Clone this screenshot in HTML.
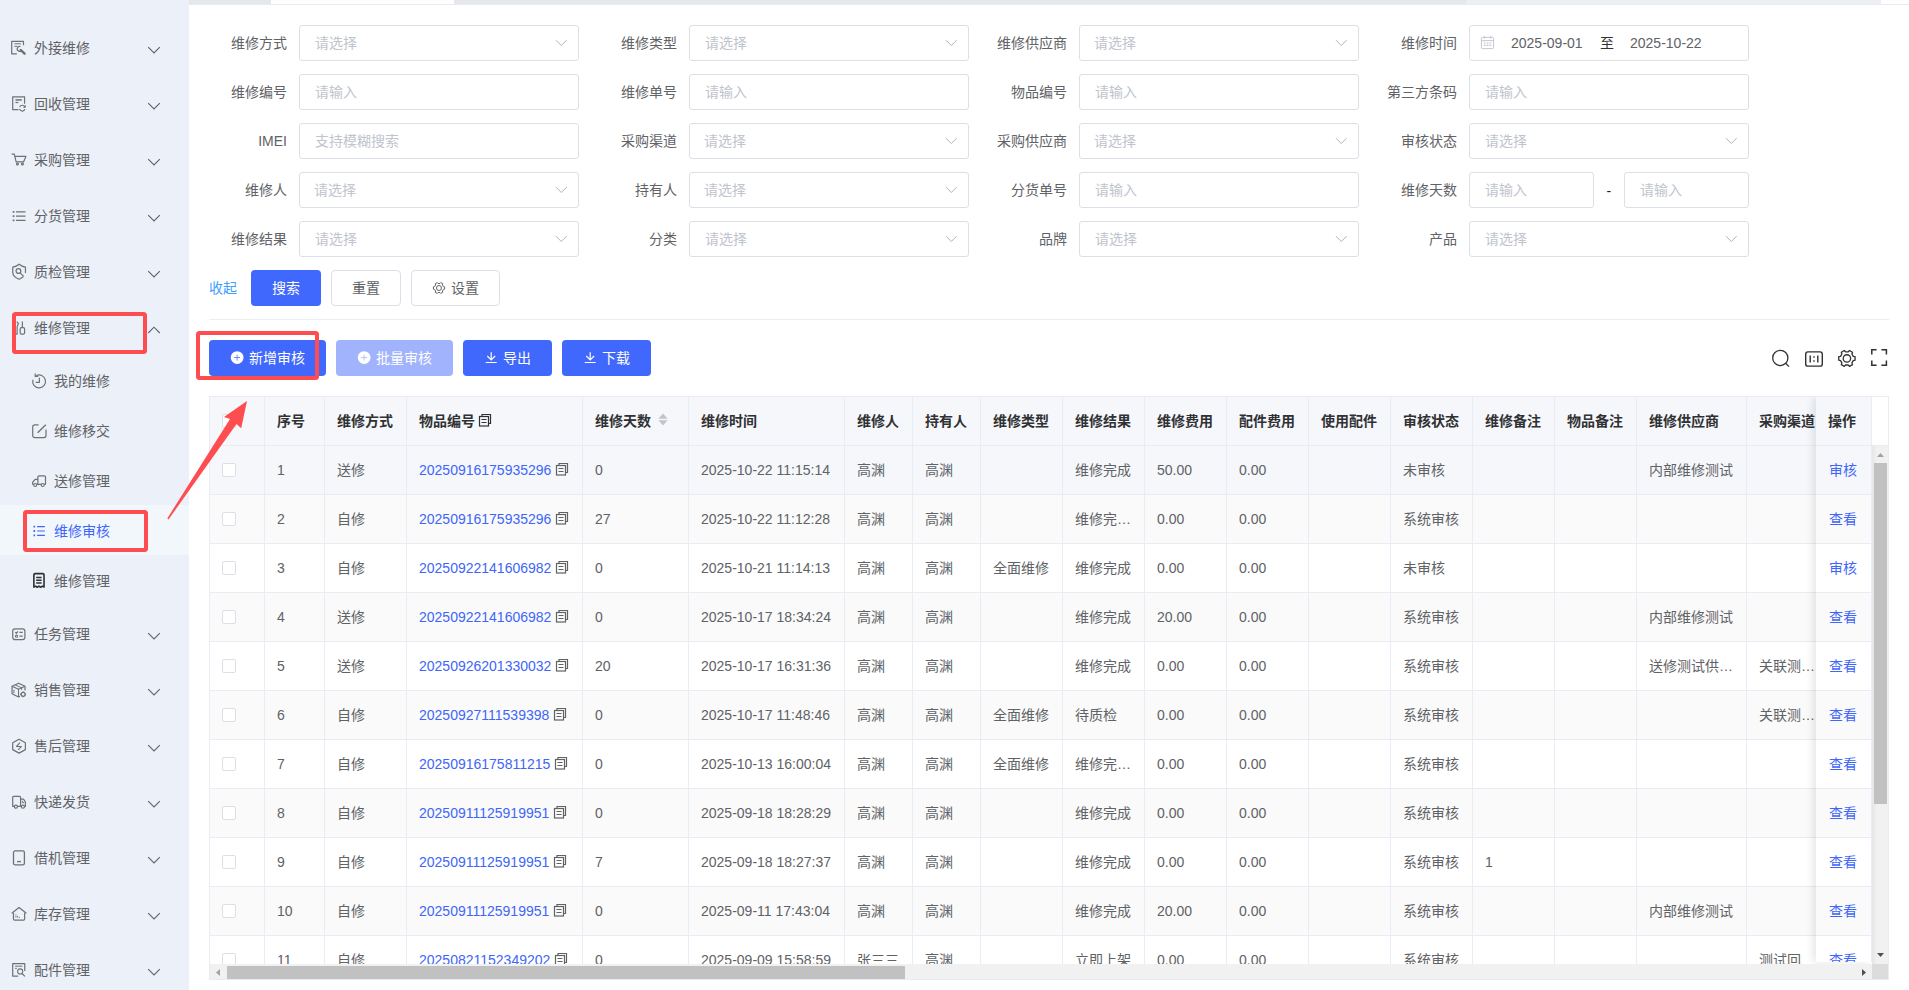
<!DOCTYPE html><html lang="zh-CN"><head><meta charset="utf-8"><title>维修审核</title><style>
*{box-sizing:border-box;margin:0;padding:0}
html,body{width:1909px;height:990px;overflow:hidden;background:#fff}
body{position:relative;font-family:"Liberation Sans","Noto Sans CJK SC",sans-serif;font-size:14px;color:#606266}
.a{position:absolute;white-space:nowrap}
.side{left:0;top:0;width:189px;height:990px;background:#ecf0f8}
.mi{left:0;width:189px;height:56px;line-height:56px}
.mi .t{left:34px;top:1px;height:56px;line-height:57px}
.mi svg.ic{position:absolute;left:9px;top:18px;width:20px;height:20px}
.mi svg.ar{position:absolute;left:147px;top:26px;width:14px;height:10px}
.si{left:0;width:189px;height:50px;line-height:50px}
.si .t{left:54px;top:1px;height:50px;line-height:51px}
.si svg.ic{position:absolute;left:30px;top:15px;width:20px;height:20px}
.si.on{background:#f2f7fb;color:#4066f9}
.lb{height:36px;line-height:36px;text-align:right;width:90px}
.in{height:36px;width:280px;border:1px solid #dcdfe6;border-radius:3px;background:#fff}
.ph{color:#c0c4cc;height:36px;line-height:36px}
.btn{height:36px;line-height:36px;border-radius:4px;text-align:center}
.btn.p{background:#4068fc;color:#fff}
.btn.d{background:#a0b3fc;color:#fff}
.btn.w{background:#fff;border:1px solid #dcdfe6;color:#606266;line-height:34px}
.th{font-weight:bold;color:#303133;height:48px;line-height:48px}
.td{height:48px;line-height:48px}
.lk{color:#4066f9}
.row{left:210px;width:1662px;height:49px;border-bottom:1px solid #eaecf5}
.vl{width:1px;background:#eaecf5}
.cb{width:14px;height:14px;border:1px solid #dcdfe6;border-radius:2px;background:#fff}
</style></head><body>
<div class="a" style="left:189px;top:0;width:1720px;height:4px;background:#fff"></div>
<div class="a" style="left:189px;top:0;width:82px;height:4px;background:#e4e7ec"></div>
<div class="a" style="left:454px;top:0;width:1012px;height:4px;background:#e4e7ec"></div>
<div class="a" style="left:1466px;top:0;width:415px;height:4px;background:#ebeff4"></div>
<div class="a" style="left:189px;top:4px;width:1720px;height:1px;background:#e9ebee"></div>
<div class="a side">
<div class="a mi" style="top:19px"><svg class="ic" viewBox="0 0 20 20" fill="none" stroke="#6e7175" stroke-width="1.2" stroke-linejoin="round"><g transform="translate(2.70 4.40) scale(0.9200 0.9172)"><path vector-effect="non-scaling-stroke" d="M12.8 4.2V0H0V13.5H5.6"/><path vector-effect="non-scaling-stroke" d="M3 2.6H10M3 5.4H6.2" stroke-width="1"/><path vector-effect="non-scaling-stroke" d="M9.6 5.6A2.7 2.7 0 1 0 11.2 9.2"/><path vector-effect="non-scaling-stroke" d="M9.8 9.4L14 13.4" stroke-width="2.4" stroke-linecap="round"/></g></svg><div class="a t">外接维修</div><svg class="ar" viewBox="0 0 14 10"><path d="M1.2 2.2 L7 8 L12.8 2.2" fill="none" stroke="#5f6368" stroke-width="1.1"/></svg></div>
<div class="a mi" style="top:75px"><svg class="ic" viewBox="0 0 20 20" fill="none" stroke="#6e7175" stroke-width="1.2" stroke-linejoin="round"><g transform="translate(3.70 3.80) scale(0.9130 0.9211)"><path vector-effect="non-scaling-stroke" d="M13 7.6V0H0V14H6.4"/><path vector-effect="non-scaling-stroke" d="M3 3.4H10" stroke-width="1.5"/><path vector-effect="non-scaling-stroke" d="M3 6.2H6.2" stroke-width="1.2"/><path vector-effect="non-scaling-stroke" d="M13.4 11.2A3.1 3.1 0 0 0 7.6 11.2M7.5 13.2A3.1 3.1 0 0 0 13.4 13.4"/><path vector-effect="non-scaling-stroke" d="M13.8 9.2V11.4H11.6" stroke-width="1"/></g></svg><div class="a t">回收管理</div><svg class="ar" viewBox="0 0 14 10"><path d="M1.2 2.2 L7 8 L12.8 2.2" fill="none" stroke="#5f6368" stroke-width="1.1"/></svg></div>
<div class="a mi" style="top:131px"><svg class="ic" viewBox="0 0 20 20" fill="none" stroke="#6e7175" stroke-width="1.2" stroke-linejoin="round"><g transform="translate(2.70 5.20) scale(0.9241 0.9024)"><path vector-effect="non-scaling-stroke" d="M0 0H2.8L4.8 8.6H12.8L15.4 2.4H3.4"/><circle vector-effect="non-scaling-stroke" cx="6.2" cy="10.8" r="1.0"/><circle vector-effect="non-scaling-stroke" cx="11.6" cy="10.8" r="1.0"/></g></svg><div class="a t">采购管理</div><svg class="ar" viewBox="0 0 14 10"><path d="M1.2 2.2 L7 8 L12.8 2.2" fill="none" stroke="#5f6368" stroke-width="1.1"/></svg></div>
<div class="a mi" style="top:187px"><svg class="ic" viewBox="0 0 20 20" fill="none" stroke="#6e7175" stroke-width="1.2" stroke-linejoin="round"><g transform="translate(3.70 6.00) scale(0.9143 0.9444)"><path vector-effect="non-scaling-stroke" d="M3.6 0.9H14M3.6 5.4H14M3.6 9.9H14" stroke-width="1.3"/><path vector-effect="non-scaling-stroke" d="M0 0.9H1.9M0 5.4H1.9M0 9.9H1.9" stroke-width="1.7"/></g></svg><div class="a t">分货管理</div><svg class="ar" viewBox="0 0 14 10"><path d="M1.2 2.2 L7 8 L12.8 2.2" fill="none" stroke="#5f6368" stroke-width="1.1"/></svg></div>
<div class="a mi" style="top:243px"><svg class="ic" viewBox="0 0 20 20" fill="none" stroke="#6e7175" stroke-width="1.2" stroke-linejoin="round"><g transform="translate(3.00 3.20) scale(0.9221 0.9268)"><path vector-effect="non-scaling-stroke" d="M14.6 9.6V3.2C12 2.8 9.6 1.6 7.7 0C5.8 1.6 3.4 2.8 0.8 3.2V8.6C0.8 12 3.8 14.6 7.7 16.2C9.3 15.5 10.8 14.7 12 13.6"/><circle vector-effect="non-scaling-stroke" cx="7" cy="7.4" r="2.6"/><path vector-effect="non-scaling-stroke" d="M8.9 9.3L12.4 12.8" stroke-linecap="round"/></g></svg><div class="a t">质检管理</div><svg class="ar" viewBox="0 0 14 10"><path d="M1.2 2.2 L7 8 L12.8 2.2" fill="none" stroke="#5f6368" stroke-width="1.1"/></svg></div>
<div class="a mi" style="top:299px"><svg class="ic" viewBox="0 0 20 20" fill="none" stroke="#6e7175" stroke-width="1.2" stroke-linejoin="round"><g transform="translate(5.60 4.50) scale(0.9000 0.9149)"><path vector-effect="non-scaling-stroke" d="M8.6 0V6.8"/><rect vector-effect="non-scaling-stroke" x="6.2" y="6.8" width="4.9" height="7" rx="1.4"/><path vector-effect="non-scaling-stroke" d="M2.4 0.2L4.2 2.2L2.8 5.6V13.8H0.4V6.2"/></g></svg><div class="a t">维修管理</div><svg class="ar" viewBox="0 0 14 10"><path d="M1.2 8 L7 2.2 L12.8 8" fill="none" stroke="#5f6368" stroke-width="1.1"/></svg></div>
<div class="a si" style="top:355px"><svg class="ic" viewBox="0 0 20 20" fill="none" stroke="#6e7175" stroke-width="1.2" stroke-linejoin="round"><path d="M6.1 5.75A6.4 6.4 0 1 1 2.92 9.74"/><path d="M5.2 3.4V6.5H8.2"/><path d="M9.4 7.7V12.3H5.7"/></svg><div class="a t">我的维修</div></div>
<div class="a si" style="top:405px"><svg class="ic" viewBox="0 0 20 20" fill="none" stroke="#6e7175" stroke-width="1.2" stroke-linejoin="round"><path d="M16 9.6V15.6a2 2 0 0 1 -2 2H4.7a2 2 0 0 1 -2 -2V6.9a2 2 0 0 1 2 -2H8.6"/><path d="M7.6 12.8L15.8 4.8" stroke-width="1.4"/></svg><div class="a t">维修移交</div></div>
<div class="a si" style="top:455px"><svg class="ic" viewBox="0 0 20 20" fill="none" stroke="#6e7175" stroke-width="1.2" stroke-linejoin="round"><path d="M14.4 14.3H15.5V7a1.2 1.2 0 0 0 -1.2 -1.2H9.1a1.2 1.2 0 0 0 -1.2 1.2V14.3H11"/><path d="M7.9 9.4H5.2L2.7 12.2V14.3H3.6M6.8 14.3H7.9"/><circle cx="5.2" cy="15" r="1.5"/><circle cx="12.7" cy="15" r="1.5"/></svg><div class="a t">送修管理</div></div>
<div class="a si on" style="top:505px"><svg class="ic" viewBox="0 0 20 20" fill="none" stroke="#4066f9" stroke-width="1.2" stroke-linejoin="round"><g transform="translate(3.50 5.80) scale(0.9048 0.8966)"><path vector-effect="non-scaling-stroke" d="M4 1H12.6M4 5.8H12.6M4 10.6H12.6" stroke-width="1.2"/><path vector-effect="non-scaling-stroke" d="M0 1H1.8M0 5.8H1.8M0 10.6H1.8" stroke-width="1.8"/></g></svg><div class="a t">维修审核</div></div>
<div class="a si" style="top:555px"><svg class="ic" viewBox="0 0 20 20" fill="none" stroke="#2f3033" stroke-width="1.2" stroke-linejoin="round"><g transform="translate(3.50 3.60) scale(0.9008 0.9236)"><path vector-effect="non-scaling-stroke" d="M0.4 14.6V1.4C0.4 0.6 1 0 1.8 0H10.3C11.1 0 11.7 0.6 11.7 1.4V14.6L9.8 13.6L7.9 14.8L6 13.6L4.2 14.8L2.3 13.6Z" stroke-width="1.6"/><path vector-effect="non-scaling-stroke" d="M3 4.2H9M3 7.2H9M3 10.2H9" stroke-width="1.3"/></g></svg><div class="a t">维修管理</div></div>
<div class="a mi" style="top:605px"><svg class="ic" viewBox="0 0 20 20" fill="none" stroke="#6e7175" stroke-width="1.2" stroke-linejoin="round"><g transform="translate(3.70 5.80) scale(0.9104 0.9008)"><rect vector-effect="non-scaling-stroke" x="0" y="0" width="13.4" height="12.1" rx="2.6"/><path vector-effect="non-scaling-stroke" d="M7.4 4H11M7.4 8.2H11" stroke-width="1.2"/><circle vector-effect="non-scaling-stroke" cx="4.2" cy="8.2" r="1.2" stroke-width="1.1"/><path vector-effect="non-scaling-stroke" d="M2.8 3.8L4 5L5.8 2.8" stroke-width="1.1"/></g></svg><div class="a t">任务管理</div><svg class="ar" viewBox="0 0 14 10"><path d="M1.2 2.2 L7 8 L12.8 2.2" fill="none" stroke="#5f6368" stroke-width="1.1"/></svg></div>
<div class="a mi" style="top:661px"><svg class="ic" viewBox="0 0 20 20" fill="none" stroke="#6e7175" stroke-width="1.2" stroke-linejoin="round"><g transform="translate(2.50 3.90) scale(0.9241 0.9231)"><path vector-effect="non-scaling-stroke" d="M14.6 8.2V3.6L7.6 0.3L0.6 3.6V11.8L7.6 15.2L9.2 14.4"/><path vector-effect="non-scaling-stroke" d="M0.6 3.6L7.6 7L14.6 3.6M7.6 7V15.2" stroke-width="1.1"/><path vector-effect="non-scaling-stroke" d="M3.8 2L11 5.4V7.6" stroke-width="1"/><path vector-effect="non-scaling-stroke" d="M2.6 7.4V11.2" stroke-width="1"/><circle vector-effect="non-scaling-stroke" cx="12.6" cy="12.4" r="2.2" stroke-width="1.3"/><path vector-effect="non-scaling-stroke" d="M12.6 9.2V10M12.6 14.8V15.6M9.4 12.4H10.2M15 12.4H15.8" stroke-width="1.2"/></g></svg><div class="a t">销售管理</div><svg class="ar" viewBox="0 0 14 10"><path d="M1.2 2.2 L7 8 L12.8 2.2" fill="none" stroke="#5f6368" stroke-width="1.1"/></svg></div>
<div class="a mi" style="top:717px"><svg class="ic" viewBox="0 0 20 20" fill="none" stroke="#6e7175" stroke-width="1.2" stroke-linejoin="round"><g transform="translate(3.70 4.20) scale(0.9137 0.9205)"><path vector-effect="non-scaling-stroke" d="M6.95 0L13.9 3.8V11.3L6.95 15.1L0 11.3V3.8Z"/><path vector-effect="non-scaling-stroke" d="M8 3.8L4.2 7.9H9.6L6 11.6" stroke-width="1.1"/></g></svg><div class="a t">售后管理</div><svg class="ar" viewBox="0 0 14 10"><path d="M1.2 2.2 L7 8 L12.8 2.2" fill="none" stroke="#5f6368" stroke-width="1.1"/></svg></div>
<div class="a mi" style="top:773px"><svg class="ic" viewBox="0 0 20 20" fill="none" stroke="#6e7175" stroke-width="1.2" stroke-linejoin="round"><g transform="translate(3.70 5.30) scale(0.9137 0.9098)"><path vector-effect="non-scaling-stroke" d="M1.6 11H0V1C0 0.4 0.4 0 1 0H7.6C8.2 0 8.6 0.4 8.6 1V11H5.4"/><path vector-effect="non-scaling-stroke" d="M8.6 3H11.8L13.9 6.4V11H12.8M8.6 11H9.6"/><circle vector-effect="non-scaling-stroke" cx="3.5" cy="11.4" r="1.7"/><circle vector-effect="non-scaling-stroke" cx="11.2" cy="11.4" r="1.7"/><path vector-effect="non-scaling-stroke" d="M10.6 5V7H12.4" stroke-width="1"/></g></svg><div class="a t">快递发货</div><svg class="ar" viewBox="0 0 14 10"><path d="M1.2 2.2 L7 8 L12.8 2.2" fill="none" stroke="#5f6368" stroke-width="1.1"/></svg></div>
<div class="a mi" style="top:829px"><svg class="ic" viewBox="0 0 20 20" fill="none" stroke="#6e7175" stroke-width="1.2" stroke-linejoin="round"><g transform="translate(4.50 3.90) scale(0.9008 0.9211)"><rect vector-effect="non-scaling-stroke" x="0" y="0" width="12.1" height="15.2" rx="1.8" stroke-width="1.3"/><path vector-effect="non-scaling-stroke" d="M4 11.6H8.2" stroke-width="1.4"/></g></svg><div class="a t">借机管理</div><svg class="ar" viewBox="0 0 14 10"><path d="M1.2 2.2 L7 8 L12.8 2.2" fill="none" stroke="#5f6368" stroke-width="1.1"/></svg></div>
<div class="a mi" style="top:885px"><svg class="ic" viewBox="0 0 20 20" fill="none" stroke="#6e7175" stroke-width="1.2" stroke-linejoin="round"><g transform="translate(2.70 4.60) scale(0.9245 0.9130)"><path vector-effect="non-scaling-stroke" d="M0 6.2L7.95 0L15.9 6.2"/><path vector-effect="non-scaling-stroke" d="M1.9 5.6V12.6C1.9 13.3 2.4 13.8 3.1 13.8H12.8C13.5 13.8 14 13.3 14 12.6V5.6"/><path vector-effect="non-scaling-stroke" d="M4.6 7.4V11.4M6.4 9.2V11.4M8.2 10.4V11.4" stroke-width="1" stroke-dasharray="1 0.6"/></g></svg><div class="a t">库存管理</div><svg class="ar" viewBox="0 0 14 10"><path d="M1.2 2.2 L7 8 L12.8 2.2" fill="none" stroke="#5f6368" stroke-width="1.1"/></svg></div>
<div class="a mi" style="top:941px"><svg class="ic" viewBox="0 0 20 20" fill="none" stroke="#6e7175" stroke-width="1.2" stroke-linejoin="round"><g transform="translate(3.70 4.60) scale(0.9124 0.9149)"><path vector-effect="non-scaling-stroke" d="M13.2 8V0H0V13.6H6"/><path vector-effect="non-scaling-stroke" d="M2.6 2.8H10.6" stroke-width="1"/><path vector-effect="non-scaling-stroke" d="M2.6 5.2H4.6" stroke-width="1"/><circle vector-effect="non-scaling-stroke" cx="8.2" cy="8.6" r="2.8" stroke-width="1.1"/><path vector-effect="non-scaling-stroke" d="M10.2 10.8L13.4 14" stroke-width="1.2"/></g></svg><div class="a t">配件管理</div><svg class="ar" viewBox="0 0 14 10"><path d="M1.2 2.2 L7 8 L12.8 2.2" fill="none" stroke="#5f6368" stroke-width="1.1"/></svg></div>
</div>
<div class="a lb" style="left:197px;top:25px">维修方式</div>
<div class="a in" style="left:299px;top:25px"><div class="a ph" style="left:15px;top:-1px">请选择</div><svg class="a" style="left:254px;top:12px;width:14px;height:10px" viewBox="0 0 14 10"><path d="M2 2.2 L7.3 7.5 L12.6 2.2" fill="none" stroke="#afb3bc" stroke-width="1"/></svg></div>
<div class="a lb" style="left:587px;top:25px">维修类型</div>
<div class="a in" style="left:689px;top:25px"><div class="a ph" style="left:15px;top:-1px">请选择</div><svg class="a" style="left:254px;top:12px;width:14px;height:10px" viewBox="0 0 14 10"><path d="M2 2.2 L7.3 7.5 L12.6 2.2" fill="none" stroke="#afb3bc" stroke-width="1"/></svg></div>
<div class="a lb" style="left:977px;top:25px">维修供应商</div>
<div class="a in" style="left:1079px;top:25px"><div class="a ph" style="left:14px;top:-1px">请选择</div><svg class="a" style="left:254px;top:12px;width:14px;height:10px" viewBox="0 0 14 10"><path d="M2 2.2 L7.3 7.5 L12.6 2.2" fill="none" stroke="#afb3bc" stroke-width="1"/></svg></div>
<div class="a lb" style="left:1367px;top:25px">维修时间</div>
<div class="a in" style="left:1469px;top:25px"><svg class="a" style="left:9.6px;top:9.2px;width:15px;height:15px" viewBox="0 0 16 16" fill="none" stroke="#c0c4cc" stroke-width="1"><rect x="1.5" y="2.5" width="13" height="12" rx="1"/><path d="M1.5 6H14.5M4.5 1V4M11.5 1V4"/><path d="M4 8.5H6M7 8.5H9M10 8.5H12M4 11H6M7 11H9M10 11H12" stroke-width="1.2"/></svg><div class="a" style="left:41px;top:-1px;height:36px;line-height:36px;color:#606266">2025-09-01</div><div class="a" style="left:130px;top:-1px;height:36px;line-height:36px;color:#303133">至</div><div class="a" style="left:160px;top:-1px;height:36px;line-height:36px;color:#606266">2025-10-22</div></div>
<div class="a lb" style="left:197px;top:74px">维修编号</div>
<div class="a in" style="left:299px;top:74px"><div class="a ph" style="left:15px;top:-1px">请输入</div></div>
<div class="a lb" style="left:587px;top:74px">维修单号</div>
<div class="a in" style="left:689px;top:74px"><div class="a ph" style="left:15px;top:-1px">请输入</div></div>
<div class="a lb" style="left:977px;top:74px">物品编号</div>
<div class="a in" style="left:1079px;top:74px"><div class="a ph" style="left:15px;top:-1px">请输入</div></div>
<div class="a lb" style="left:1367px;top:74px">第三方条码</div>
<div class="a in" style="left:1469px;top:74px"><div class="a ph" style="left:15px;top:-1px">请输入</div></div>
<div class="a lb" style="left:197px;top:123px">IMEI</div>
<div class="a in" style="left:299px;top:123px"><div class="a ph" style="left:15px;top:-1px">支持模糊搜索</div></div>
<div class="a lb" style="left:587px;top:123px">采购渠道</div>
<div class="a in" style="left:689px;top:123px"><div class="a ph" style="left:14px;top:-1px">请选择</div><svg class="a" style="left:254px;top:12px;width:14px;height:10px" viewBox="0 0 14 10"><path d="M2 2.2 L7.3 7.5 L12.6 2.2" fill="none" stroke="#afb3bc" stroke-width="1"/></svg></div>
<div class="a lb" style="left:977px;top:123px">采购供应商</div>
<div class="a in" style="left:1079px;top:123px"><div class="a ph" style="left:14px;top:-1px">请选择</div><svg class="a" style="left:254px;top:12px;width:14px;height:10px" viewBox="0 0 14 10"><path d="M2 2.2 L7.3 7.5 L12.6 2.2" fill="none" stroke="#afb3bc" stroke-width="1"/></svg></div>
<div class="a lb" style="left:1367px;top:123px">审核状态</div>
<div class="a in" style="left:1469px;top:123px"><div class="a ph" style="left:15px;top:-1px">请选择</div><svg class="a" style="left:254px;top:12px;width:14px;height:10px" viewBox="0 0 14 10"><path d="M2 2.2 L7.3 7.5 L12.6 2.2" fill="none" stroke="#afb3bc" stroke-width="1"/></svg></div>
<div class="a lb" style="left:197px;top:172px">维修人</div>
<div class="a in" style="left:299px;top:172px"><div class="a ph" style="left:14px;top:-1px">请选择</div><svg class="a" style="left:254px;top:12px;width:14px;height:10px" viewBox="0 0 14 10"><path d="M2 2.2 L7.3 7.5 L12.6 2.2" fill="none" stroke="#afb3bc" stroke-width="1"/></svg></div>
<div class="a lb" style="left:587px;top:172px">持有人</div>
<div class="a in" style="left:689px;top:172px"><div class="a ph" style="left:14px;top:-1px">请选择</div><svg class="a" style="left:254px;top:12px;width:14px;height:10px" viewBox="0 0 14 10"><path d="M2 2.2 L7.3 7.5 L12.6 2.2" fill="none" stroke="#afb3bc" stroke-width="1"/></svg></div>
<div class="a lb" style="left:977px;top:172px">分货单号</div>
<div class="a in" style="left:1079px;top:172px"><div class="a ph" style="left:15px;top:-1px">请输入</div></div>
<div class="a lb" style="left:1367px;top:172px">维修天数</div>
<div class="a in" style="left:1469px;top:172px;width:125px"><div class="a ph" style="left:15px;top:-1px">请输入</div></div>
<div class="a" style="left:1606.5px;top:173px;height:36px;line-height:36px;color:#1f1f1f">-</div>
<div class="a in" style="left:1624px;top:172px;width:125px"><div class="a ph" style="left:15px;top:-1px">请输入</div></div>
<div class="a lb" style="left:197px;top:221px">维修结果</div>
<div class="a in" style="left:299px;top:221px"><div class="a ph" style="left:15px;top:-1px">请选择</div><svg class="a" style="left:254px;top:12px;width:14px;height:10px" viewBox="0 0 14 10"><path d="M2 2.2 L7.3 7.5 L12.6 2.2" fill="none" stroke="#afb3bc" stroke-width="1"/></svg></div>
<div class="a lb" style="left:587px;top:221px">分类</div>
<div class="a in" style="left:689px;top:221px"><div class="a ph" style="left:15px;top:-1px">请选择</div><svg class="a" style="left:254px;top:12px;width:14px;height:10px" viewBox="0 0 14 10"><path d="M2 2.2 L7.3 7.5 L12.6 2.2" fill="none" stroke="#afb3bc" stroke-width="1"/></svg></div>
<div class="a lb" style="left:977px;top:221px">品牌</div>
<div class="a in" style="left:1079px;top:221px"><div class="a ph" style="left:15px;top:-1px">请选择</div><svg class="a" style="left:254px;top:12px;width:14px;height:10px" viewBox="0 0 14 10"><path d="M2 2.2 L7.3 7.5 L12.6 2.2" fill="none" stroke="#afb3bc" stroke-width="1"/></svg></div>
<div class="a lb" style="left:1367px;top:221px">产品</div>
<div class="a in" style="left:1469px;top:221px"><div class="a ph" style="left:15px;top:-1px">请选择</div><svg class="a" style="left:254px;top:12px;width:14px;height:10px" viewBox="0 0 14 10"><path d="M2 2.2 L7.3 7.5 L12.6 2.2" fill="none" stroke="#afb3bc" stroke-width="1"/></svg></div>
<div class="a" style="left:209px;top:270px;height:36px;line-height:36px;color:#409eff">收起</div>
<div class="a btn p" style="left:251px;top:270px;width:70px">搜索</div>
<div class="a btn w" style="left:331px;top:270px;width:70px">重置</div>
<div class="a btn w" style="left:411px;top:270px;width:89px;text-align:left"><svg class="a" style="left:19.9px;top:9.75px;width:14px;height:14px" viewBox="0 0 14 14" fill="none" stroke="#606266" stroke-width="1" stroke-linejoin="round"><path d="M11.36 5.53 L12.58 5.81 L12.58 8.19 L11.36 8.47 L10.45 10.04 L10.81 11.24 L8.76 12.42 L7.91 11.51 L6.09 11.51 L5.24 12.42 L3.19 11.24 L3.55 10.04 L2.64 8.47 L1.42 8.19 L1.42 5.81 L2.64 5.53 L3.55 3.96 L3.19 2.76 L5.24 1.58 L6.09 2.49 L7.91 2.49 L8.76 1.58 L10.81 2.76 L10.45 3.96Z"/><circle cx="7" cy="7" r="2.5"/></svg><div class="a" style="left:39px;top:0;line-height:34px">设置</div></div>
<div class="a" style="left:209px;top:319px;width:1680px;height:1px;background:#ebedf0"></div>
<div class="a btn p" style="left:209px;top:340px;width:117px;text-align:left"><svg class="a" style="left:21px;top:11px;width:14px;height:14px" viewBox="0 0 14 14"><circle cx="7.15" cy="6.55" r="6.4" fill="#fff"/><path d="M7.1 3.7V9.6M4.1 6.5H10.1" stroke="#4068fc" stroke-width="0.9" fill="none" opacity="0.85"/></svg><div class="a" style="left:40px;top:0;line-height:36px">新增审核</div></div>
<div class="a btn d" style="left:336px;top:340px;width:117px;text-align:left"><svg class="a" style="left:21px;top:11px;width:14px;height:14px" viewBox="0 0 14 14"><circle cx="7.15" cy="6.55" r="6.4" fill="#fff"/><path d="M7.1 3.7V9.6M4.1 6.5H10.1" stroke="#a0b3fc" stroke-width="0.9" fill="none" opacity="0.85"/></svg><div class="a" style="left:40px;top:0;line-height:36px">批量审核</div></div>
<div class="a btn p" style="left:463px;top:340px;width:89px;text-align:left"><svg class="a" style="left:21px;top:11px;width:14px;height:14px" viewBox="0 0 14 14" fill="none" stroke="#fff" stroke-width="1.2"><path d="M7.2 1.3V8.8M3.3 5L7.2 8.9L11.1 5M1.7 11.5H12.7"/></svg><div class="a" style="left:40px;top:0;line-height:36px">导出</div></div>
<div class="a btn p" style="left:562px;top:340px;width:89px;text-align:left"><svg class="a" style="left:21px;top:11px;width:14px;height:14px" viewBox="0 0 14 14" fill="none" stroke="#fff" stroke-width="1.2"><path d="M7.2 1.3V8.8M3.3 5L7.2 8.9L11.1 5M1.7 11.5H12.7"/></svg><div class="a" style="left:40px;top:0;line-height:36px">下载</div></div>
<svg class="a" style="left:1770px;top:347px;width:22px;height:22px" viewBox="0 0 22 22" fill="none" stroke="#303133" stroke-width="1.3"><circle cx="10.3" cy="10.95" r="7.6"/><path d="M15.7 16.3L19 19.6"/></svg>
<svg class="a" style="left:1803px;top:347px;width:22px;height:22px" viewBox="0 0 22 22" fill="none" stroke="#303133" stroke-width="1.4"><rect x="2.7" y="4.9" width="16.6" height="14.2" rx="2.2"/><path d="M7.2 8.4V15.6M14.8 8.4V15.6" /><path d="M11 9.2V10.8M11 13.2V14.8"/></svg>
<svg class="a" style="left:1836px;top:347px;width:22px;height:22px" viewBox="0 0 22 22" fill="none" stroke="#303133" stroke-width="1.3" stroke-linejoin="round"><path d="M17.25 9.31 L19.07 9.71 L19.07 13.19 L17.25 13.59 L15.93 15.88 L16.49 17.66 L13.48 19.39 L12.22 18.02 L9.58 18.02 L8.32 19.39 L5.31 17.66 L5.87 15.88 L4.55 13.59 L2.73 13.19 L2.73 9.71 L4.55 9.31 L5.87 7.02 L5.31 5.24 L8.32 3.51 L9.58 4.88 L12.22 4.88 L13.48 3.51 L16.49 5.24 L15.93 7.02Z"/><circle cx="10.9" cy="11.45" r="3.7"/></svg>
<svg class="a" style="left:1868px;top:346px;width:22px;height:22px" viewBox="0 0 22 22" fill="none" stroke="#303133" stroke-width="1.5"><path d="M3.8 8.6V3.8H8.6M13.4 3.8H18.4V8.6M18.4 14.4V19.2H13.4M8.6 19.2H3.8V14.4"/></svg>
<div class="a" style="left:209px;top:396px;width:1680px;height:584px;border:1px solid #eaecf5;overflow:hidden;background:#fff">
<div class="a" style="left:0;top:0;width:1662px;height:49px;background:#f5f7fb;border-bottom:1px solid #eaecf5"></div>
<div class="a th" style="left:67px;top:0">序号</div>
<div class="a th" style="left:127px;top:0">维修方式</div>
<div class="a th" style="left:209px;top:0">物品编号<svg style="display:inline-block;vertical-align:-1px;margin-left:3px;width:14px;height:14px" viewBox="0 0 14 14" fill="none" stroke="#303133" stroke-width="1.2"><path d="M4 3.5V1.5H12.5V10.5H10.5"/><rect x="1.5" y="3.5" width="9" height="9.5"/><path d="M3.5 6.5H8.5M3.5 9.5H8.5"/></svg></div>
<div class="a th" style="left:385px;top:0">维修天数<svg style="position:absolute;left:63px;top:15.7px;width:10px;height:13px" viewBox="0 0 10 13"><path d="M5 0.6L9.6 5.7H0.4Z" fill="#c0c4cc"/><path d="M5 12.4L9.6 7.3H0.4Z" fill="#c0c4cc"/></svg></div>
<div class="a th" style="left:491px;top:0">维修时间</div>
<div class="a th" style="left:647px;top:0">维修人</div>
<div class="a th" style="left:715px;top:0">持有人</div>
<div class="a th" style="left:783px;top:0">维修类型</div>
<div class="a th" style="left:865px;top:0">维修结果</div>
<div class="a th" style="left:947px;top:0">维修费用</div>
<div class="a th" style="left:1029px;top:0">配件费用</div>
<div class="a th" style="left:1111px;top:0">使用配件</div>
<div class="a th" style="left:1193px;top:0">审核状态</div>
<div class="a th" style="left:1275px;top:0">维修备注</div>
<div class="a th" style="left:1357px;top:0">物品备注</div>
<div class="a th" style="left:1439px;top:0">维修供应商</div>
<div class="a th" style="left:1549px;top:0">采购渠道</div>
<div class="a cb" style="left:12px;top:17px"></div>
<div class="a" style="left:0;top:49px;width:1662px;height:49px;background:#f5f7fb;border-bottom:1px solid #eaecf5">
<div class="a cb" style="left:12px;top:17px"></div>
<div class="a td" style="left:67px;top:0;width:47px;overflow:hidden">1</div>
<div class="a td" style="left:127px;top:0;width:69px;overflow:hidden">送修</div>
<div class="a td lk" style="left:209px;top:0">20250916175935296<svg style="display:inline-block;vertical-align:-1px;margin-left:4px;width:14px;height:14px" viewBox="0 0 14 14" fill="none" stroke="#606266" stroke-width="1.2"><path d="M4 3.5V1.5H12.5V10.5H10.5"/><rect x="1.5" y="3.5" width="9" height="9.5"/><path d="M3.5 6.5H8.5M3.5 9.5H8.5"/></svg></div>
<div class="a td" style="left:385px;top:0;width:93px;overflow:hidden">0</div>
<div class="a td" style="left:491px;top:0;width:143px;overflow:hidden">2025-10-22 11:15:14</div>
<div class="a td" style="left:647px;top:0;width:55px;overflow:hidden">高渊</div>
<div class="a td" style="left:715px;top:0;width:55px;overflow:hidden">高渊</div>
<div class="a td" style="left:865px;top:0;width:69px;overflow:hidden">维修完成</div>
<div class="a td" style="left:947px;top:0;width:69px;overflow:hidden">50.00</div>
<div class="a td" style="left:1029px;top:0;width:69px;overflow:hidden">0.00</div>
<div class="a td" style="left:1193px;top:0;width:69px;overflow:hidden">未审核</div>
<div class="a td" style="left:1439px;top:0;width:97px;overflow:hidden">内部维修测试</div>
</div>
<div class="a" style="left:0;top:98px;width:1662px;height:49px;background:#fafafa;border-bottom:1px solid #eaecf5">
<div class="a cb" style="left:12px;top:17px"></div>
<div class="a td" style="left:67px;top:0;width:47px;overflow:hidden">2</div>
<div class="a td" style="left:127px;top:0;width:69px;overflow:hidden">自修</div>
<div class="a td lk" style="left:209px;top:0">20250916175935296<svg style="display:inline-block;vertical-align:-1px;margin-left:4px;width:14px;height:14px" viewBox="0 0 14 14" fill="none" stroke="#606266" stroke-width="1.2"><path d="M4 3.5V1.5H12.5V10.5H10.5"/><rect x="1.5" y="3.5" width="9" height="9.5"/><path d="M3.5 6.5H8.5M3.5 9.5H8.5"/></svg></div>
<div class="a td" style="left:385px;top:0;width:93px;overflow:hidden">27</div>
<div class="a td" style="left:491px;top:0;width:143px;overflow:hidden">2025-10-22 11:12:28</div>
<div class="a td" style="left:647px;top:0;width:55px;overflow:hidden">高渊</div>
<div class="a td" style="left:715px;top:0;width:55px;overflow:hidden">高渊</div>
<div class="a td" style="left:865px;top:0;width:69px;overflow:hidden">维修完…</div>
<div class="a td" style="left:947px;top:0;width:69px;overflow:hidden">0.00</div>
<div class="a td" style="left:1029px;top:0;width:69px;overflow:hidden">0.00</div>
<div class="a td" style="left:1193px;top:0;width:69px;overflow:hidden">系统审核</div>
</div>
<div class="a" style="left:0;top:147px;width:1662px;height:49px;background:#fff;border-bottom:1px solid #eaecf5">
<div class="a cb" style="left:12px;top:17px"></div>
<div class="a td" style="left:67px;top:0;width:47px;overflow:hidden">3</div>
<div class="a td" style="left:127px;top:0;width:69px;overflow:hidden">自修</div>
<div class="a td lk" style="left:209px;top:0">20250922141606982<svg style="display:inline-block;vertical-align:-1px;margin-left:4px;width:14px;height:14px" viewBox="0 0 14 14" fill="none" stroke="#606266" stroke-width="1.2"><path d="M4 3.5V1.5H12.5V10.5H10.5"/><rect x="1.5" y="3.5" width="9" height="9.5"/><path d="M3.5 6.5H8.5M3.5 9.5H8.5"/></svg></div>
<div class="a td" style="left:385px;top:0;width:93px;overflow:hidden">0</div>
<div class="a td" style="left:491px;top:0;width:143px;overflow:hidden">2025-10-21 11:14:13</div>
<div class="a td" style="left:647px;top:0;width:55px;overflow:hidden">高渊</div>
<div class="a td" style="left:715px;top:0;width:55px;overflow:hidden">高渊</div>
<div class="a td" style="left:783px;top:0;width:69px;overflow:hidden">全面维修</div>
<div class="a td" style="left:865px;top:0;width:69px;overflow:hidden">维修完成</div>
<div class="a td" style="left:947px;top:0;width:69px;overflow:hidden">0.00</div>
<div class="a td" style="left:1029px;top:0;width:69px;overflow:hidden">0.00</div>
<div class="a td" style="left:1193px;top:0;width:69px;overflow:hidden">未审核</div>
</div>
<div class="a" style="left:0;top:196px;width:1662px;height:49px;background:#fafafa;border-bottom:1px solid #eaecf5">
<div class="a cb" style="left:12px;top:17px"></div>
<div class="a td" style="left:67px;top:0;width:47px;overflow:hidden">4</div>
<div class="a td" style="left:127px;top:0;width:69px;overflow:hidden">送修</div>
<div class="a td lk" style="left:209px;top:0">20250922141606982<svg style="display:inline-block;vertical-align:-1px;margin-left:4px;width:14px;height:14px" viewBox="0 0 14 14" fill="none" stroke="#606266" stroke-width="1.2"><path d="M4 3.5V1.5H12.5V10.5H10.5"/><rect x="1.5" y="3.5" width="9" height="9.5"/><path d="M3.5 6.5H8.5M3.5 9.5H8.5"/></svg></div>
<div class="a td" style="left:385px;top:0;width:93px;overflow:hidden">0</div>
<div class="a td" style="left:491px;top:0;width:143px;overflow:hidden">2025-10-17 18:34:24</div>
<div class="a td" style="left:647px;top:0;width:55px;overflow:hidden">高渊</div>
<div class="a td" style="left:715px;top:0;width:55px;overflow:hidden">高渊</div>
<div class="a td" style="left:865px;top:0;width:69px;overflow:hidden">维修完成</div>
<div class="a td" style="left:947px;top:0;width:69px;overflow:hidden">20.00</div>
<div class="a td" style="left:1029px;top:0;width:69px;overflow:hidden">0.00</div>
<div class="a td" style="left:1193px;top:0;width:69px;overflow:hidden">系统审核</div>
<div class="a td" style="left:1439px;top:0;width:97px;overflow:hidden">内部维修测试</div>
</div>
<div class="a" style="left:0;top:245px;width:1662px;height:49px;background:#fff;border-bottom:1px solid #eaecf5">
<div class="a cb" style="left:12px;top:17px"></div>
<div class="a td" style="left:67px;top:0;width:47px;overflow:hidden">5</div>
<div class="a td" style="left:127px;top:0;width:69px;overflow:hidden">送修</div>
<div class="a td lk" style="left:209px;top:0">20250926201330032<svg style="display:inline-block;vertical-align:-1px;margin-left:4px;width:14px;height:14px" viewBox="0 0 14 14" fill="none" stroke="#606266" stroke-width="1.2"><path d="M4 3.5V1.5H12.5V10.5H10.5"/><rect x="1.5" y="3.5" width="9" height="9.5"/><path d="M3.5 6.5H8.5M3.5 9.5H8.5"/></svg></div>
<div class="a td" style="left:385px;top:0;width:93px;overflow:hidden">20</div>
<div class="a td" style="left:491px;top:0;width:143px;overflow:hidden">2025-10-17 16:31:36</div>
<div class="a td" style="left:647px;top:0;width:55px;overflow:hidden">高渊</div>
<div class="a td" style="left:715px;top:0;width:55px;overflow:hidden">高渊</div>
<div class="a td" style="left:865px;top:0;width:69px;overflow:hidden">维修完成</div>
<div class="a td" style="left:947px;top:0;width:69px;overflow:hidden">0.00</div>
<div class="a td" style="left:1029px;top:0;width:69px;overflow:hidden">0.00</div>
<div class="a td" style="left:1193px;top:0;width:69px;overflow:hidden">系统审核</div>
<div class="a td" style="left:1439px;top:0;width:97px;overflow:hidden">送修测试供…</div>
<div class="a td" style="left:1549px;top:0;width:112px;overflow:hidden">关联测…</div>
</div>
<div class="a" style="left:0;top:294px;width:1662px;height:49px;background:#fafafa;border-bottom:1px solid #eaecf5">
<div class="a cb" style="left:12px;top:17px"></div>
<div class="a td" style="left:67px;top:0;width:47px;overflow:hidden">6</div>
<div class="a td" style="left:127px;top:0;width:69px;overflow:hidden">自修</div>
<div class="a td lk" style="left:209px;top:0">20250927111539398<svg style="display:inline-block;vertical-align:-1px;margin-left:4px;width:14px;height:14px" viewBox="0 0 14 14" fill="none" stroke="#606266" stroke-width="1.2"><path d="M4 3.5V1.5H12.5V10.5H10.5"/><rect x="1.5" y="3.5" width="9" height="9.5"/><path d="M3.5 6.5H8.5M3.5 9.5H8.5"/></svg></div>
<div class="a td" style="left:385px;top:0;width:93px;overflow:hidden">0</div>
<div class="a td" style="left:491px;top:0;width:143px;overflow:hidden">2025-10-17 11:48:46</div>
<div class="a td" style="left:647px;top:0;width:55px;overflow:hidden">高渊</div>
<div class="a td" style="left:715px;top:0;width:55px;overflow:hidden">高渊</div>
<div class="a td" style="left:783px;top:0;width:69px;overflow:hidden">全面维修</div>
<div class="a td" style="left:865px;top:0;width:69px;overflow:hidden">待质检</div>
<div class="a td" style="left:947px;top:0;width:69px;overflow:hidden">0.00</div>
<div class="a td" style="left:1029px;top:0;width:69px;overflow:hidden">0.00</div>
<div class="a td" style="left:1193px;top:0;width:69px;overflow:hidden">系统审核</div>
<div class="a td" style="left:1549px;top:0;width:112px;overflow:hidden">关联测…</div>
</div>
<div class="a" style="left:0;top:343px;width:1662px;height:49px;background:#fff;border-bottom:1px solid #eaecf5">
<div class="a cb" style="left:12px;top:17px"></div>
<div class="a td" style="left:67px;top:0;width:47px;overflow:hidden">7</div>
<div class="a td" style="left:127px;top:0;width:69px;overflow:hidden">自修</div>
<div class="a td lk" style="left:209px;top:0">20250916175811215<svg style="display:inline-block;vertical-align:-1px;margin-left:4px;width:14px;height:14px" viewBox="0 0 14 14" fill="none" stroke="#606266" stroke-width="1.2"><path d="M4 3.5V1.5H12.5V10.5H10.5"/><rect x="1.5" y="3.5" width="9" height="9.5"/><path d="M3.5 6.5H8.5M3.5 9.5H8.5"/></svg></div>
<div class="a td" style="left:385px;top:0;width:93px;overflow:hidden">0</div>
<div class="a td" style="left:491px;top:0;width:143px;overflow:hidden">2025-10-13 16:00:04</div>
<div class="a td" style="left:647px;top:0;width:55px;overflow:hidden">高渊</div>
<div class="a td" style="left:715px;top:0;width:55px;overflow:hidden">高渊</div>
<div class="a td" style="left:783px;top:0;width:69px;overflow:hidden">全面维修</div>
<div class="a td" style="left:865px;top:0;width:69px;overflow:hidden">维修完…</div>
<div class="a td" style="left:947px;top:0;width:69px;overflow:hidden">0.00</div>
<div class="a td" style="left:1029px;top:0;width:69px;overflow:hidden">0.00</div>
<div class="a td" style="left:1193px;top:0;width:69px;overflow:hidden">系统审核</div>
</div>
<div class="a" style="left:0;top:392px;width:1662px;height:49px;background:#fafafa;border-bottom:1px solid #eaecf5">
<div class="a cb" style="left:12px;top:17px"></div>
<div class="a td" style="left:67px;top:0;width:47px;overflow:hidden">8</div>
<div class="a td" style="left:127px;top:0;width:69px;overflow:hidden">自修</div>
<div class="a td lk" style="left:209px;top:0">20250911125919951<svg style="display:inline-block;vertical-align:-1px;margin-left:4px;width:14px;height:14px" viewBox="0 0 14 14" fill="none" stroke="#606266" stroke-width="1.2"><path d="M4 3.5V1.5H12.5V10.5H10.5"/><rect x="1.5" y="3.5" width="9" height="9.5"/><path d="M3.5 6.5H8.5M3.5 9.5H8.5"/></svg></div>
<div class="a td" style="left:385px;top:0;width:93px;overflow:hidden">0</div>
<div class="a td" style="left:491px;top:0;width:143px;overflow:hidden">2025-09-18 18:28:29</div>
<div class="a td" style="left:647px;top:0;width:55px;overflow:hidden">高渊</div>
<div class="a td" style="left:715px;top:0;width:55px;overflow:hidden">高渊</div>
<div class="a td" style="left:865px;top:0;width:69px;overflow:hidden">维修完成</div>
<div class="a td" style="left:947px;top:0;width:69px;overflow:hidden">0.00</div>
<div class="a td" style="left:1029px;top:0;width:69px;overflow:hidden">0.00</div>
<div class="a td" style="left:1193px;top:0;width:69px;overflow:hidden">系统审核</div>
</div>
<div class="a" style="left:0;top:441px;width:1662px;height:49px;background:#fff;border-bottom:1px solid #eaecf5">
<div class="a cb" style="left:12px;top:17px"></div>
<div class="a td" style="left:67px;top:0;width:47px;overflow:hidden">9</div>
<div class="a td" style="left:127px;top:0;width:69px;overflow:hidden">自修</div>
<div class="a td lk" style="left:209px;top:0">20250911125919951<svg style="display:inline-block;vertical-align:-1px;margin-left:4px;width:14px;height:14px" viewBox="0 0 14 14" fill="none" stroke="#606266" stroke-width="1.2"><path d="M4 3.5V1.5H12.5V10.5H10.5"/><rect x="1.5" y="3.5" width="9" height="9.5"/><path d="M3.5 6.5H8.5M3.5 9.5H8.5"/></svg></div>
<div class="a td" style="left:385px;top:0;width:93px;overflow:hidden">7</div>
<div class="a td" style="left:491px;top:0;width:143px;overflow:hidden">2025-09-18 18:27:37</div>
<div class="a td" style="left:647px;top:0;width:55px;overflow:hidden">高渊</div>
<div class="a td" style="left:715px;top:0;width:55px;overflow:hidden">高渊</div>
<div class="a td" style="left:865px;top:0;width:69px;overflow:hidden">维修完成</div>
<div class="a td" style="left:947px;top:0;width:69px;overflow:hidden">0.00</div>
<div class="a td" style="left:1029px;top:0;width:69px;overflow:hidden">0.00</div>
<div class="a td" style="left:1193px;top:0;width:69px;overflow:hidden">系统审核</div>
<div class="a td" style="left:1275px;top:0;width:69px;overflow:hidden">1</div>
</div>
<div class="a" style="left:0;top:490px;width:1662px;height:49px;background:#fafafa;border-bottom:1px solid #eaecf5">
<div class="a cb" style="left:12px;top:17px"></div>
<div class="a td" style="left:67px;top:0;width:47px;overflow:hidden">10</div>
<div class="a td" style="left:127px;top:0;width:69px;overflow:hidden">自修</div>
<div class="a td lk" style="left:209px;top:0">20250911125919951<svg style="display:inline-block;vertical-align:-1px;margin-left:4px;width:14px;height:14px" viewBox="0 0 14 14" fill="none" stroke="#606266" stroke-width="1.2"><path d="M4 3.5V1.5H12.5V10.5H10.5"/><rect x="1.5" y="3.5" width="9" height="9.5"/><path d="M3.5 6.5H8.5M3.5 9.5H8.5"/></svg></div>
<div class="a td" style="left:385px;top:0;width:93px;overflow:hidden">0</div>
<div class="a td" style="left:491px;top:0;width:143px;overflow:hidden">2025-09-11 17:43:04</div>
<div class="a td" style="left:647px;top:0;width:55px;overflow:hidden">高渊</div>
<div class="a td" style="left:715px;top:0;width:55px;overflow:hidden">高渊</div>
<div class="a td" style="left:865px;top:0;width:69px;overflow:hidden">维修完成</div>
<div class="a td" style="left:947px;top:0;width:69px;overflow:hidden">20.00</div>
<div class="a td" style="left:1029px;top:0;width:69px;overflow:hidden">0.00</div>
<div class="a td" style="left:1193px;top:0;width:69px;overflow:hidden">系统审核</div>
<div class="a td" style="left:1439px;top:0;width:97px;overflow:hidden">内部维修测试</div>
</div>
<div class="a" style="left:0;top:539px;width:1662px;height:49px;background:#fff;border-bottom:1px solid #eaecf5">
<div class="a cb" style="left:12px;top:17px"></div>
<div class="a td" style="left:67px;top:0;width:47px;overflow:hidden">11</div>
<div class="a td" style="left:127px;top:0;width:69px;overflow:hidden">自修</div>
<div class="a td lk" style="left:209px;top:0">20250821152349202<svg style="display:inline-block;vertical-align:-1px;margin-left:4px;width:14px;height:14px" viewBox="0 0 14 14" fill="none" stroke="#606266" stroke-width="1.2"><path d="M4 3.5V1.5H12.5V10.5H10.5"/><rect x="1.5" y="3.5" width="9" height="9.5"/><path d="M3.5 6.5H8.5M3.5 9.5H8.5"/></svg></div>
<div class="a td" style="left:385px;top:0;width:93px;overflow:hidden">0</div>
<div class="a td" style="left:491px;top:0;width:143px;overflow:hidden">2025-09-09 15:58:59</div>
<div class="a td" style="left:647px;top:0;width:55px;overflow:hidden">张三三</div>
<div class="a td" style="left:715px;top:0;width:55px;overflow:hidden">高渊</div>
<div class="a td" style="left:865px;top:0;width:69px;overflow:hidden">立即上架</div>
<div class="a td" style="left:947px;top:0;width:69px;overflow:hidden">0.00</div>
<div class="a td" style="left:1029px;top:0;width:69px;overflow:hidden">0.00</div>
<div class="a td" style="left:1193px;top:0;width:69px;overflow:hidden">系统审核</div>
<div class="a td" style="left:1549px;top:0;width:43px;overflow:hidden">测试回收</div>
</div>
<div class="a vl" style="left:54px;top:0;height:568px"></div>
<div class="a vl" style="left:114px;top:0;height:568px"></div>
<div class="a vl" style="left:196px;top:0;height:568px"></div>
<div class="a vl" style="left:372px;top:0;height:568px"></div>
<div class="a vl" style="left:478px;top:0;height:568px"></div>
<div class="a vl" style="left:634px;top:0;height:568px"></div>
<div class="a vl" style="left:702px;top:0;height:568px"></div>
<div class="a vl" style="left:770px;top:0;height:568px"></div>
<div class="a vl" style="left:852px;top:0;height:568px"></div>
<div class="a vl" style="left:934px;top:0;height:568px"></div>
<div class="a vl" style="left:1016px;top:0;height:568px"></div>
<div class="a vl" style="left:1098px;top:0;height:568px"></div>
<div class="a vl" style="left:1180px;top:0;height:568px"></div>
<div class="a vl" style="left:1262px;top:0;height:568px"></div>
<div class="a vl" style="left:1344px;top:0;height:568px"></div>
<div class="a vl" style="left:1426px;top:0;height:568px"></div>
<div class="a vl" style="left:1536px;top:0;height:568px"></div>
<div class="a" style="left:1606px;top:0;width:56px;height:565px;overflow:hidden;background:#fff;box-shadow:-3px 0 8px rgba(0,0,0,.10);border-right:1px solid #eaecf5">
<div class="a" style="left:0;top:0;width:55px;height:49px;background:#f5f7fb;border-bottom:1px solid #eaecf5"><div class="a th" style="left:12px;top:0">操作</div></div>
<div class="a" style="left:0;top:49px;width:55px;height:49px;background:#f5f7fb;border-bottom:1px solid #eaecf5"><div class="a td lk" style="left:13px;top:0">审核</div></div>
<div class="a" style="left:0;top:98px;width:55px;height:49px;background:#fafafa;border-bottom:1px solid #eaecf5"><div class="a td lk" style="left:13px;top:0">查看</div></div>
<div class="a" style="left:0;top:147px;width:55px;height:49px;background:#fff;border-bottom:1px solid #eaecf5"><div class="a td lk" style="left:13px;top:0">审核</div></div>
<div class="a" style="left:0;top:196px;width:55px;height:49px;background:#fafafa;border-bottom:1px solid #eaecf5"><div class="a td lk" style="left:13px;top:0">查看</div></div>
<div class="a" style="left:0;top:245px;width:55px;height:49px;background:#fff;border-bottom:1px solid #eaecf5"><div class="a td lk" style="left:13px;top:0">查看</div></div>
<div class="a" style="left:0;top:294px;width:55px;height:49px;background:#fafafa;border-bottom:1px solid #eaecf5"><div class="a td lk" style="left:13px;top:0">查看</div></div>
<div class="a" style="left:0;top:343px;width:55px;height:49px;background:#fff;border-bottom:1px solid #eaecf5"><div class="a td lk" style="left:13px;top:0">查看</div></div>
<div class="a" style="left:0;top:392px;width:55px;height:49px;background:#fafafa;border-bottom:1px solid #eaecf5"><div class="a td lk" style="left:13px;top:0">查看</div></div>
<div class="a" style="left:0;top:441px;width:55px;height:49px;background:#fff;border-bottom:1px solid #eaecf5"><div class="a td lk" style="left:13px;top:0">查看</div></div>
<div class="a" style="left:0;top:490px;width:55px;height:49px;background:#fafafa;border-bottom:1px solid #eaecf5"><div class="a td lk" style="left:13px;top:0">查看</div></div>
<div class="a" style="left:0;top:539px;width:55px;height:49px;background:#fff;border-bottom:1px solid #eaecf5"><div class="a td lk" style="left:13px;top:0">查看</div></div>
</div>
<div class="a" style="left:1662px;top:0;width:16px;height:48px;background:#fff"></div>
<div class="a" style="left:1662px;top:48px;width:16px;height:1px;background:#eaecf5"></div>
<div class="a" style="left:1662px;top:49px;width:16px;height:518px;background:linear-gradient(90deg,#e6e6e6,#f1f1f1 5px)"></div>
<div class="a" style="left:1664px;top:66px;width:13px;height:341px;background:#c1c1c1"></div>
<svg class="a" style="left:1667px;top:56px;width:7px;height:4px" viewBox="0 0 7 4"><path d="M3.5 0L7 4H0Z" fill="#a3a3a3"/></svg>
<svg class="a" style="left:1667px;top:556px;width:7px;height:4px" viewBox="0 0 7 4"><path d="M3.5 4L7 0H0Z" fill="#505050"/></svg>
<div class="a" style="left:0;top:567px;width:1662px;height:15px;background:#f1f1f1"></div>
<div class="a" style="left:17px;top:569px;width:678px;height:13px;background:#c1c1c1"></div>
<svg class="a" style="left:6px;top:572px;width:4px;height:7px" viewBox="0 0 4 7"><path d="M0 3.5L4 0V7Z" fill="#a3a3a3"/></svg>
<svg class="a" style="left:1652px;top:572px;width:4px;height:7px" viewBox="0 0 4 7"><path d="M4 3.5L0 0V7Z" fill="#505050"/></svg>
<div class="a" style="left:1662px;top:567px;width:16px;height:15px;background:#dcdcdc"></div>
</div>
<svg class="a" style="left:0;top:0;width:1909px;height:990px;pointer-events:none" viewBox="0 0 1909 990"><rect x="14" y="314" width="131" height="38" rx="1.5" fill="none" stroke="#fd4d50" stroke-width="4"/><rect x="198" y="333" width="119" height="45" rx="1.5" fill="none" stroke="#fd4d50" stroke-width="4"/><rect x="25" y="512" width="121" height="38" rx="1.5" fill="none" stroke="#fd4d50" stroke-width="4"/><path d="M167.3 518.4 L230 419 L224 417 L247 401 L241.2 428.2 L236.5 424 L168.5 519.4 Z" fill="#fd4d50"/></svg>
</body></html>
